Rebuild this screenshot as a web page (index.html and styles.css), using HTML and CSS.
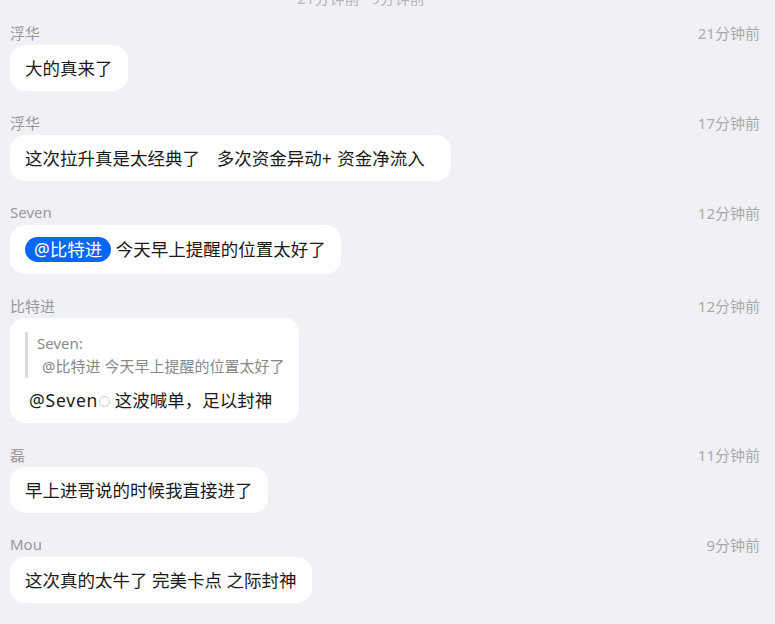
FILE: index.html
```html
<!DOCTYPE html>
<html lang="zh-CN">
<head>
    <meta charset="UTF-8">
    <meta name="viewport" content="width=device-width, initial-scale=1.0">
    <title>消息</title>
    <link rel="stylesheet" href="styles.css">
</head>
<body>
    <div class="range">21分钟前 · 9分钟前</div>
    <div class="list">
        <div class="msg">
            <div class="msgHead"><span class="name">浮华</span><span class="time">21分钟前</span></div>
            <div class="bubble">大的真来了</div>
        </div>
        <div class="msg">
            <div class="msgHead"><span class="name">浮华</span><span class="time">17分钟前</span></div>
            <div class="bubble wide">这次拉升真是太经典了&nbsp;&nbsp;&nbsp;多次资金异动+ 资金净流入</div>
        </div>
        <div class="msg">
            <div class="msgHead"><span class="name">Seven</span><span class="time">12分钟前</span></div>
            <div class="bubble"><span class="mention">@比特进</span> 今天早上提醒的位置太好了</div>
        </div>
        <div class="msg">
            <div class="msgHead"><span class="name">比特进</span><span class="time">12分钟前</span></div>
            <div class="bubble">
                <div class="quote">
                    <div class="quoteName">Seven:</div>
                    <div class="quoteText">@比特进 今天早上提醒的位置太好了</div>
                </div>
                <div class="reply"><span class="at">@Seven</span><span class="dot"></span> 这波喊单，足以封神</div>
            </div>
        </div>
        <div class="msg">
            <div class="msgHead"><span class="name">磊</span><span class="time">11分钟前</span></div>
            <div class="bubble">早上进哥说的时候我直接进了</div>
        </div>
        <div class="msg">
            <div class="msgHead"><span class="name">Mou</span><span class="time">9分钟前</span></div>
            <div class="bubble">这次真的太牛了 完美卡点 之际封神</div>
        </div>
    </div>
</body>
</html>
```

FILE: styles.css
```css
body{
    margin: 0;
    background-color: #f1f0f5;
    font-family: "Noto Sans", "Noto Sans CJK SC", sans-serif;
    color: #1a1a1a;
    overflow: hidden;
}

.range{
    margin-top: -12px;
    width: 722px;
    text-align: center;
    font-size: 15px;
    line-height: 20px;
    color: #b5b5b8;
}

.list{
    padding: 14px 15px 0 10px;
}

.msg{
    margin-bottom: 21px;
}

.msgHead{
    display: flex;
    justify-content: space-between;
    align-items: center;
    height: 20px;
    margin-bottom: 3px;
    font-size: 15px;
    color: #999;
}

.time{
    color: #aaa;
}

.bubble{
    display: inline-block;
    background-color: #fff;
    border-radius: 15px;
    padding: 12px 15px;
    font-size: 17.5px;
    line-height: 22px;
}

.wide{
    padding-right: 26px;
    word-spacing: 1px;
}

.mention{
    display: inline-block;
    background-color: #0b66f7;
    color: #fff;
    border-radius: 13px;
    padding: 1px 9px 2px 9px;
}

.quote{
    border-left: 3px solid #dcdcdc;
    padding-left: 9px;
    margin-top: 2px;
    font-size: 15px;
    line-height: 23px;
    color: #888;
}

.quoteText{
    padding-left: 5px;
}

.reply{
    margin-top: 11px;
    margin-left: 4px;
}

.at{
    letter-spacing: 0.8px;
}

.dot{
    display: inline-block;
    width: 9px;
    height: 9px;
    border: 1px solid #ccc;
    border-radius: 50%;
    margin-left: 1px;
}
```
